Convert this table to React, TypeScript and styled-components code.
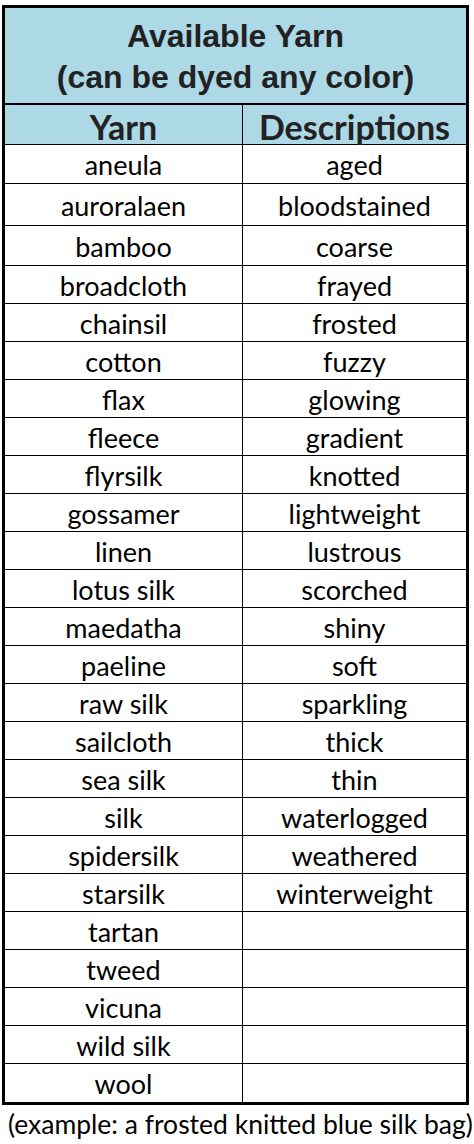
import React from "react";
import styled, { createGlobalStyle } from "styled-components";

const Global = createGlobalStyle`
  *, *::before, *::after { box-sizing: border-box; }
  html, body { margin: 0; padding: 0; background: #ffffff; }
  body { width: 474px; }
`;

const Page = styled.div`
  padding: 5px 5px 0 2px;
  display: flex;
  flex-direction: column;
  align-items: stretch;
`;

const Table = styled.div`
  border: 3px solid #000;
  width: 467px;
  display: flex;
  flex-direction: column;
`;

const Title = styled.div`
  background: #add8e6;
  height: 97px;
  border-bottom: 2px solid #000;
  display: flex;
  flex-direction: column;
  justify-content: center;
  align-items: center;
  font-family: "Liberation Sans", Arial, sans-serif;
  font-weight: 700;
  font-size: 32px;
  line-height: 41px;
  color: #222;
  padding-top: 2px;
`;

const Row = styled.div<{ $h: number; $head?: boolean; $last?: boolean }>`
  display: grid;
  grid-template-columns: 238px 1fr;
  height: ${(p) => p.$h}px;
  border-bottom: ${(p) => (p.$last ? "none" : "1px solid #000")};
  background: ${(p) => (p.$head ? "#add8e6" : "#fff")};
`;

const Cell = styled.div<{ $head?: boolean; $first?: boolean }>`
  display: flex;
  align-items: center;
  justify-content: center;
  border-right: ${(p) => (p.$first ? "1px solid #000" : "none")};
  font-family: Lato, "Noto Sans", sans-serif;
  font-weight: ${(p) => (p.$head ? 700 : 400)};
  font-size: ${(p) => (p.$head ? "34px" : "27px")};
  color: ${(p) => (p.$head ? "#222" : "#000")};
  white-space: nowrap;
  padding-top: 1px;
`;

const Caption = styled.div`
  font-family: Lato, "Noto Sans", sans-serif;
  font-size: 26.5px;
  line-height: 30px;
  color: #000;
  text-align: center;
  margin-top: 4px;
  white-space: nowrap;
  padding-left: 6px;
`;

const yarns = [
  "aneula", "auroralaen", "bamboo", "broadcloth", "chainsil", "cotton", "flax",
  "fleece", "flyrsilk", "gossamer", "linen", "lotus silk", "maedatha", "paeline",
  "raw silk", "sailcloth", "sea silk", "silk", "spidersilk", "starsilk", "tartan",
  "tweed", "vicuna", "wild silk", "wool",
];

const descs = [
  "aged", "bloodstained", "coarse", "frayed", "frosted", "fuzzy", "glowing",
  "gradient", "knotted", "lightweight", "lustrous", "scorched", "shiny", "soft",
  "sparkling", "thick", "thin", "waterlogged", "weathered", "winterweight",
];

const heights = (i: number, last: boolean) => {
  if (i === 0) return 39;
  if (i === 1) return 42;
  if (i === 2) return 40;
  return last ? 38 : 38;
};

export default function App() {
  return (
    <>
      <Global />
      <Page>
        <Table>
          <Title>
            <span>Available Yarn</span>
            <span>(can be dyed any color)</span>
          </Title>
          <Row $h={40} $head>
            <Cell $head $first>Yarn</Cell>
            <Cell $head>Descriptions</Cell>
          </Row>
          {yarns.map((y, i) => {
            const last = i === yarns.length - 1;
            return (
              <Row key={y} $h={heights(i, last)} $last={last}>
                <Cell $first>{y}</Cell>
                <Cell>{descs[i] ?? ""}</Cell>
              </Row>
            );
          })}
        </Table>
        <Caption>(example: a frosted knitted blue silk bag)</Caption>
      </Page>
    </>
  );
}
